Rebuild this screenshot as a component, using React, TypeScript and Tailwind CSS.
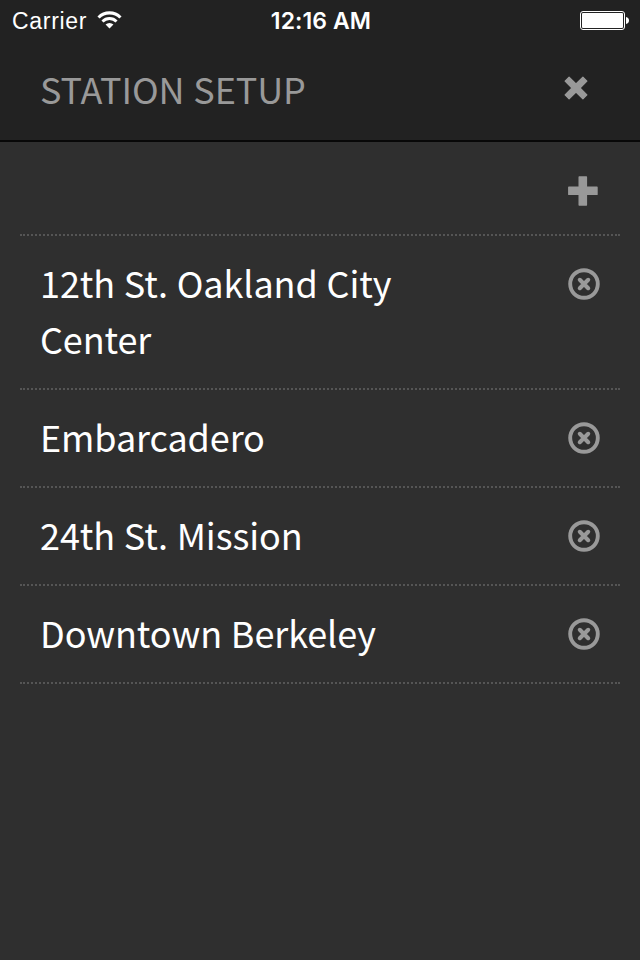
import React from "react";

const stations = [
  "12th St. Oakland City Center",
  "Embarcadero",
  "24th St. Mission",
  "Downtown Berkeley",
];

function WifiIcon() {
  return (
    <svg className="ml-[10px] h-[18px] w-[25px]" viewBox="0 0 26 18" fill="none" stroke="#fff">
      <path d="M1.6 6.4a16 16 0 0 1 22.8 0" strokeWidth="3.2" />
      <path d="M5.7 10.5a10.2 10.2 0 0 1 14.6 0" strokeWidth="3" />
      <path d="M13 17.8 8.9 13.7a5.8 5.8 0 0 1 8.2 0Z" fill="#fff" stroke="none" />
    </svg>
  );
}

function BatteryIcon() {
  return (
    <svg className="mt-px h-[20px] w-[50px]" viewBox="0 0 50 20">
      <rect x="0.5" y="0.5" width="44" height="18" rx="2.5" fill="none" stroke="#fff" />
      <rect x="2" y="2" width="41" height="15" rx="1" fill="#fff" />
      <path d="M46 6q3 .6 3 3.5T46 13z" fill="#fff" />
    </svg>
  );
}

function CloseIcon() {
  return (
    <svg className="h-6 w-6" viewBox="0 0 24 24" fill="#999" stroke="#999" strokeLinejoin="round">
      <path d="M5.1 1.1 12 8l6.9-6.9 4 4L16 12l6.9 6.9-4 4L12 16l-6.9 6.9-4-4L8 12 1.1 5.1z" strokeWidth="1.2" />
    </svg>
  );
}

function PlusIcon() {
  return (
    <svg className="h-[30px] w-[30px]" viewBox="0 0 30 30" fill="#999" stroke="#999" strokeLinejoin="round">
      <path d="M11.2 1h7.2v10.2H29v7.2H18.4V29h-7.2V18.4H.8v-7.2h10.4z" strokeWidth="1.4" />
    </svg>
  );
}

function RemoveIcon() {
  return (
    <svg className="h-8 w-8" viewBox="0 0 32 32" fill="none" stroke="#999">
      <circle cx="16" cy="16" r="13.8" strokeWidth="3.9" />
      <path d="m11.8 11.8 8.4 8.4m0-8.4-8.4 8.4" strokeWidth="4.1" strokeLinecap="round" />
    </svg>
  );
}

export default function App() {
  return (
    <div className="flex h-[960px] w-[640px] flex-col bg-[#2f2f2f] font-['Noto_Sans_CJK_SC',sans-serif] text-white">
      <header className="h-[142px] border-b-2 border-[#080808] bg-[#222]">
        <div className="grid h-10 grid-cols-3 items-center pl-3 pr-[10px] font-['Liberation_Sans',Arial,sans-serif] text-[23px]">
          <div className="flex items-center">
            <span className="mt-[2px] tracking-[0.7px]">Carrier</span>
            <WifiIcon />
          </div>
          <div className="mt-[2px] whitespace-nowrap text-center font-['Inter',sans-serif] text-[23px] font-semibold tracking-[0.1px]">12:16 AM</div>
          <div className="flex justify-end">
            <BatteryIcon />
          </div>
        </div>
        <div className="flex h-[100px] items-center justify-between pl-10 pr-[52px]">
          <h1 className="-mt-1 text-[36px] leading-[56px] tracking-[-0.1px] text-[#999] [word-spacing:0.9px]">STATION SETUP</h1>
          <button className="-mt-1" aria-label="Close">
            <CloseIcon />
          </button>
        </div>
      </header>
      <main className="px-5">
        <div className="flex h-[94px] items-center justify-end border-b-2 border-dotted border-[#555] pr-[22px] pt-[6px]">
          <button aria-label="Add station">
            <PlusIcon />
          </button>
        </div>
        <ul>
          {stations.map((name) => (
            <li key={name} className="flex items-start justify-between border-b-2 border-dotted border-[#555] px-5 pb-[22px] pt-[18px]">
              <span className="w-[400px] text-[36px] leading-[56px] tracking-[-0.1px] [word-spacing:0.9px]">{name}</span>
              <button className="mt-[14px]" aria-label="Remove station">
                <RemoveIcon />
              </button>
            </li>
          ))}
        </ul>
      </main>
    </div>
  );
}
